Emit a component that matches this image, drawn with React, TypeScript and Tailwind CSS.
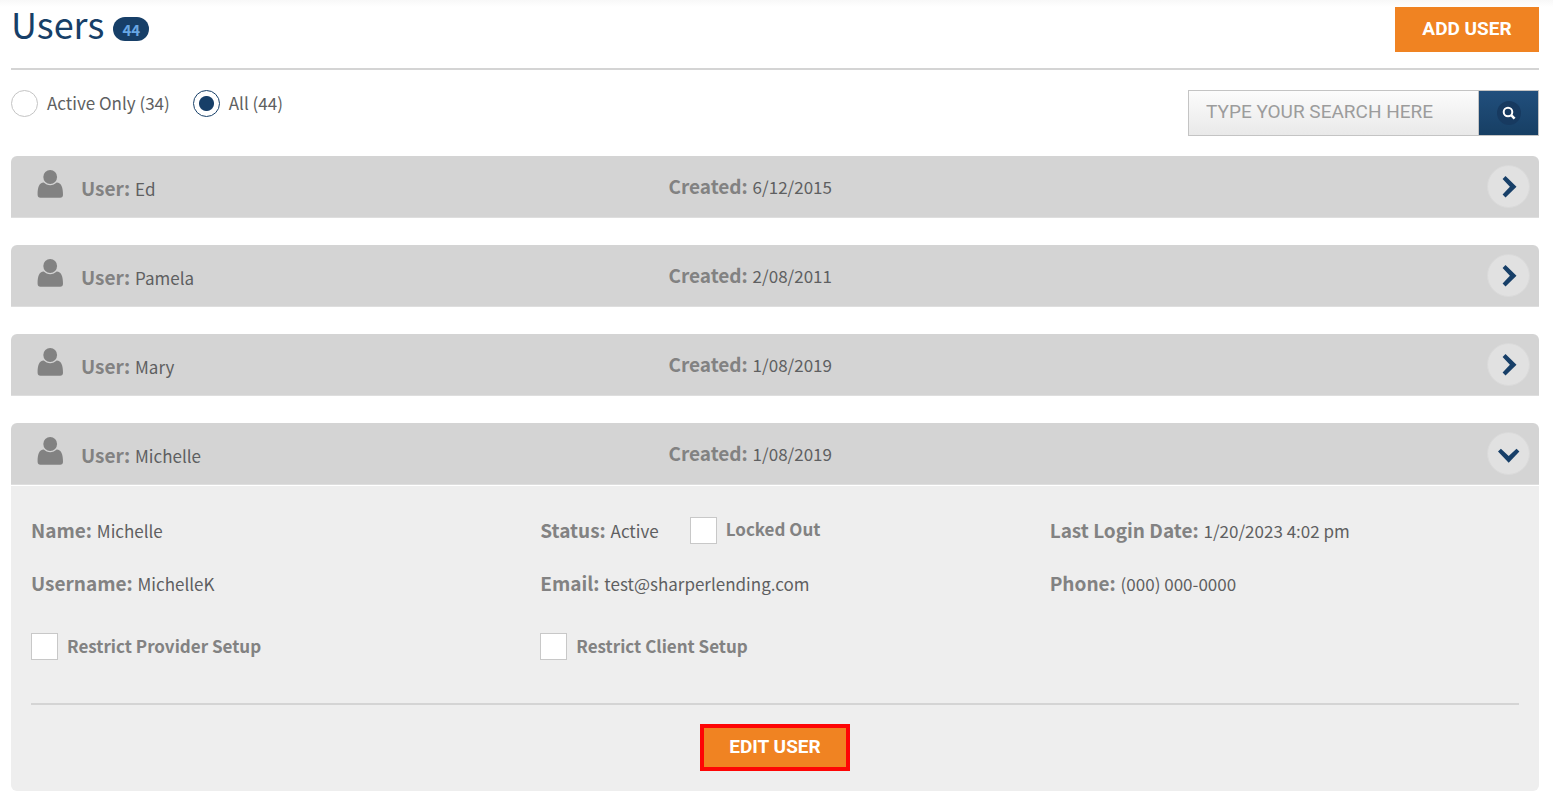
import { useState } from "react";
import type { ReactNode } from "react";

type User = { name: string; created: string };

const users: User[] = [
  { name: "Ed", created: "6/12/2015" },
  { name: "Pamela", created: "2/08/2011" },
  { name: "Mary", created: "1/08/2019" },
  { name: "Michelle", created: "1/08/2019" },
];

function UserIcon() {
  return (
    <svg viewBox="0 0 26 28" className="h-7 w-[26px] fill-[#828282]" aria-hidden="true">
      <circle cx="13.200" cy="7" r="6.900" />
      <path d="M6.700 12.600C8.500 14.300 10.700 15.200 13.200 15.200s4.700-.9 6.500-2.600C24.400 12.800 26 17.500 26 24.800c0 1.900-1 3-2.900 3H3.500C1.600 27.800.6 26.700.6 24.800.6 17.500 2 12.800 6.700 12.600z" />
    </svg>
  );
}

function Chevron({ open }: { open: boolean }) {
  return (
    <svg viewBox="0 0 22 22" className="size-[22px] fill-[#173f68]" aria-hidden="true">
      {open ? (
        <path d="M2.900 5.700 10.700 13.100 18.500 5.700 21.400 8.600 10.700 19.800 0 8.600z" />
      ) : (
        <path d="M7.500 0 18.500 10.700 7.500 21.400 4.600 18.500 11.900 10.700 4.600 2.900z" />
      )}
    </svg>
  );
}

function Field({ label, children }: { label: string; children: ReactNode }) {
  return (
    <p className="text-[17px] leading-6 text-[#5e5f61]">
      <strong className="mr-px text-[19px] font-bold text-[#828282]">{label}:</strong> {children}
    </p>
  );
}

function Check({ label }: { label: string }) {
  return (
    <label className="flex items-center gap-[9px] text-[17px] leading-6 font-bold text-[#828282]">
      <input
        type="checkbox"
        className="size-[27px] appearance-none border border-[#c8c8c8] bg-white checked:bg-[#173f68]"
      />
      <span className="pb-0.5">{label}</span>
    </label>
  );
}

function Radio({ label, checked, onChange }: { label: string; checked: boolean; onChange: () => void }) {
  return (
    <label className="flex items-center gap-[9px] text-[17px] leading-6 text-[#5e5f61]">
      <input
        type="radio"
        name="filter"
        checked={checked}
        onChange={onChange}
        className="size-[27px] appearance-none rounded-full border border-[#c4c4c4] bg-white checked:border-[#173f68] checked:bg-radial checked:from-[#173f68] checked:from-[7px] checked:to-white checked:to-[8px]"
      />
      <span className="pb-0.5">{label}</span>
    </label>
  );
}

function Details() {
  return (
    <div className="mt-px rounded-b-md bg-[#eee] px-5 pt-8 pb-5">
      <div className="-mr-10 grid grid-cols-3 gap-y-7">
        <Field label="Name">Michelle</Field>
        <div className="flex h-6 items-center gap-[31px]">
          <Field label="Status">Active</Field>
          <Check label="Locked Out" />
        </div>
        <Field label="Last Login Date">1/20/2023 4:02 pm</Field>
        <Field label="Username">MichelleK</Field>
        <Field label="Email">test@sharperlending.com</Field>
        <Field label="Phone">(000) 000-0000</Field>
      </div>
      <div className="-mr-10 mt-[37px] grid grid-cols-3">
        <Check label="Restrict Provider Setup" />
        <Check label="Restrict Client Setup" />
      </div>
      <div className="mt-[43px] flex justify-center border-t-2 border-[#d4d4d4] pt-[19px]">
        <button className="h-[47px] w-[150px] border-4 border-[#fe0505] bg-[#f08322] pb-0.5 font-[Roboto] text-[19px] leading-6 font-bold text-white">
          EDIT USER
        </button>
      </div>
    </div>
  );
}

export default function App() {
  const [filter, setFilter] = useState("all");
  const [openRow, setOpenRow] = useState(3);
  return (
    <main className="min-h-screen bg-white bg-linear-to-b from-[#f8f8f8] to-white to-[7px] pt-[7px] pr-[14px] pb-2 pl-[11px] font-['Noto_Sans_CJK_SC',sans-serif]">
      <header className="flex items-start justify-between border-b-2 border-[#d4d4d4] pb-4">
        <div className="flex items-start gap-[9px]">
          <h1 className="text-[36px] leading-8 text-[#173f68]">Users</h1>
          <span className="mt-[10px] flex h-6 w-9 items-center justify-center rounded-full bg-[#173f68] text-[15px] leading-none font-bold text-[#69a7e4]">
            44
          </span>
        </div>
        <button className="h-[45px] w-36 bg-[#f08322] pb-px font-[Roboto] text-[19px] leading-6 font-bold text-white">
          ADD USER
        </button>
      </header>
      <div className="flex items-start justify-between pt-5">
        <div className="flex gap-[23px]">
          <Radio label="Active Only (34)" checked={filter === "active"} onChange={() => setFilter("active")} />
          <Radio label="All (44)" checked={filter === "all"} onChange={() => setFilter("all")} />
        </div>
        <form className="flex h-[46px] w-[351px] border border-[#c4c4c4]" onSubmit={(e) => e.preventDefault()}>
          <input
            type="text"
            aria-label="Search"
            placeholder="TYPE YOUR SEARCH HERE"
            className="min-w-0 flex-1 bg-linear-to-b from-[#fcfcfc] to-[#e9e9e9] px-[17px] pb-0.5 font-[Roboto] text-[19px] text-[#58595b] outline-none placeholder:text-[#9c9c9c]"
          />
          <button
            aria-label="Run search"
            className="flex w-[60px] items-center justify-center border-l border-[#c4c4c4] bg-linear-to-b from-[#214f7d] to-[#173f64] pb-px"
          >
            <span className="flex size-6 items-center justify-center rounded-full bg-[#173a60]">
              <svg viewBox="0 0 14 14" className="size-[14px] fill-none stroke-white stroke-2" aria-hidden="true">
                <circle cx="6" cy="6" r="4.300" />
                <path d="M9.200 9.200 12.600 12.600" strokeWidth="2.600" />
              </svg>
            </span>
          </button>
        </form>
      </div>
      <ul className="mt-5 flex flex-col gap-[27px]">
        {users.map((user, i) => (
          <li key={i}>
            <div className="grid h-[62px] grid-cols-[42.3%_1fr_auto] items-center rounded-t-md border-b border-[#dedede] bg-[#d4d4d4] pr-[9px] pl-[26px]">
              <div className="flex items-start gap-[18px] pb-[3px]">
                <UserIcon />
                <div className="pt-[6px]">
                  <Field label="User">{user.name}</Field>
                </div>
              </div>
              <Field label="Created">{user.created}</Field>
              <button
                aria-label={"Toggle " + user.name}
                aria-expanded={openRow === i}
                onClick={() => setOpenRow(openRow === i ? -1 : i)}
                className="flex size-[43px] items-center justify-center rounded-full border border-[#dadada] bg-[#e1e1e1]"
              >
                <Chevron open={openRow === i} />
              </button>
            </div>
            {openRow === i && <Details />}
          </li>
        ))}
      </ul>
    </main>
  );
}
